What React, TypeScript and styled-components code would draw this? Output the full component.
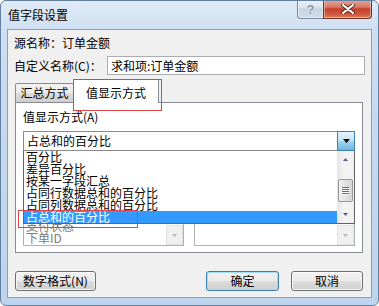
import styled, { createGlobalStyle } from "styled-components";

const GlobalStyle = createGlobalStyle`
  html, body { margin: 0; padding: 0; background: #ffffff; }
  body {
    font-family: "Noto Sans CJK SC", "Liberation Sans", sans-serif;
    font-size: 12px;
    color: #000;
  }
  * { box-sizing: border-box; }
`;

const listItems = [
  "百分比",
  "差异百分比",
  "按某一字段汇总",
  "占同行数据总和的百分比",
  "占同列数据总和的百分比",
  "占总和的百分比",
];

const ArrowDown = ({ color = "#000", w = 7, h = 4 }: { color?: string; w?: number; h?: number }) => (
  <svg width={w} height={h} viewBox={`0 0 ${w} ${h}`}>
    <polygon points={`0,0 ${w},0 ${w / 2},${h}`} fill={color} />
  </svg>
);

const ArrowUp = ({ color = "#000", w = 7, h = 4 }: { color?: string; w?: number; h?: number }) => (
  <svg width={w} height={h} viewBox={`0 0 ${w} ${h}`}>
    <polygon points={`0,${h} ${w},${h} ${w / 2},0`} fill={color} />
  </svg>
);

const App = () => {
  return (
    <>
      <GlobalStyle />
      <Window>
        <TitleBar>
          <Title>值字段设置</Title>
          <CaptionButtons>
            <CaptionButton $kind="help">?</CaptionButton>
            <CaptionButton $kind="close">
              <svg width="14" height="10" viewBox="0 0 14 10">
                <path d="M2 1 L12 9 M12 1 L2 9" stroke="#5a2a22" strokeWidth="4" strokeLinecap="round" />
                <path d="M2 1 L12 9 M12 1 L2 9" stroke="#ffffff" strokeWidth="2.2" strokeLinecap="round" />
              </svg>
            </CaptionButton>
          </CaptionButtons>
        </TitleBar>

        <Content>
          <InfoRow>源名称：订单金额</InfoRow>
          <FieldRow>
            <FieldLabel>自定义名称(C)：</FieldLabel>
            <TextInput>求和项:订单金额</TextInput>
          </FieldRow>

          <TabArea>
            <TabStrip>
              <Tab>汇总方式</Tab>
              <Tab $active>值显示方式</Tab>
            </TabStrip>
            <Highlight $left={58} $top={0} $width={89} $height={32} />

            <TabPanel>
              <PanelLabel>值显示方式(A)</PanelLabel>
              <ComboWrap>
                <Combo>
                  <ComboText>占总和的百分比</ComboText>
                  <ComboButton>
                    <ArrowDown />
                  </ComboButton>
                </Combo>
                <DropList>
                  <DropItems>
                    {listItems.map((item, i) => (
                      <DropItem key={item} $selected={i === listItems.length - 1}>
                        {item}
                      </DropItem>
                    ))}
                  </DropItems>
                  <ScrollBar>
                    <ScrollArrow>
                      <ArrowUp color="#4d6185" w={5} h={3} />
                    </ScrollArrow>
                    <ScrollTrack>
                      <Thumb>
                        <Grip />
                        <Grip />
                        <Grip />
                        <Grip />
                      </Thumb>
                    </ScrollTrack>
                    <ScrollArrow>
                      <ArrowDown color="#4d6185" w={5} h={3} />
                    </ScrollArrow>
                  </ScrollBar>
                </DropList>
              </ComboWrap>

              <LowerArea>
                <LowerLabels>
                  <span>基本字段(F)：</span>
                  <span>基本项(I)：</span>
                </LowerLabels>
                <ListBoxes>
                  <ListBox>
                    <ListItems>
                      <ListItem>客户名称</ListItem>
                      <ListItem>支付状态</ListItem>
                      <ListItem>下单ID</ListItem>
                    </ListItems>
                    <DisabledScroll>
                      <DisabledArrow>
                        <ArrowDown color="#b8b8b8" w={5} h={3} />
                      </DisabledArrow>
                    </DisabledScroll>
                  </ListBox>
                  <ListBox>
                    <ListItems />
                    <DisabledScroll>
                      <DisabledArrow>
                        <ArrowDown color="#b8b8b8" w={5} h={3} />
                      </DisabledArrow>
                    </DisabledScroll>
                  </ListBox>
                </ListBoxes>
              </LowerArea>
              <Highlight $left={2} $top={107} $width={120} $height={18} />
            </TabPanel>
          </TabArea>

          <ButtonRow>
            <PushButton $width={81}>数字格式(N)</PushButton>
            <Spacer />
            <PushButton $width={73} $default>确定</PushButton>
            <PushButton $width={72}>取消</PushButton>
          </ButtonRow>
        </Content>
      </Window>
    </>
  );
};

const Window = styled.div`
  width: 379px;
  height: 306px;
  display: flex;
  flex-direction: column;
  border: 1px solid #62809f;
  border-radius: 6px;
  overflow: hidden;
  background: linear-gradient(180deg, #e0ebf7 0px, #cfdff2 28px, #c6d9ef 120px, #bed3ec 100%);
`;

const TitleBar = styled.div`
  height: 28px;
  flex: none;
  display: flex;
  align-items: flex-start;
  padding: 0 6px 0 7px;
`;

const Title = styled.div`
  flex: 1;
  padding-top: 7px;
  line-height: 14px;
  font-size: 12px;
`;

const CaptionButtons = styled.div`
  display: flex;
  margin-top: -1px;
`;

const CaptionButton = styled.div<{ $kind: "help" | "close" }>`
  height: 19px;
  width: ${(p) => (p.$kind === "close" ? 49 : 26)}px;
  display: flex;
  align-items: center;
  justify-content: center;
  font-family: "Liberation Sans", sans-serif;
  font-weight: bold;
  font-size: 13px;
  border: 1px solid ${(p) => (p.$kind === "close" ? "#6e2e24" : "#7a8aa0")};
  border-right: ${(p) => (p.$kind === "close" ? "1px solid #6e2e24" : "none")};
  border-top: none;
  border-radius: ${(p) => (p.$kind === "close" ? "0 0 4px 0" : "0 0 0 4px")};
  color: ${(p) => (p.$kind === "close" ? "#fff" : "#8a96a6")};
  text-shadow: ${(p) => (p.$kind === "close" ? "none" : "0 0 1px #fff, 0 0 1px #fff")};
  background: ${(p) =>
    p.$kind === "close"
      ? "linear-gradient(180deg, #e7a798 0%, #d77763 40%, #c4402a 50%, #cf5a42 80%, #dc7e5c 100%)"
      : "linear-gradient(180deg, #eef3f9 0%, #dbe4ef 40%, #c5d2e1 50%, #d2deea 100%)"};
  box-shadow: inset 0 0 0 1px rgba(255, 255, 255, 0.45);
`;

const Content = styled.div`
  flex: 1;
  margin: 0 6px 7px 6px;
  border: 1px solid #8c9fb6;
  background: #f0f0f0;
  padding: 6px;
  display: flex;
  flex-direction: column;
`;

const InfoRow = styled.div`
  line-height: 14px;
  height: 14px;
`;

const FieldRow = styled.div`
  margin-top: 6px;
  height: 19px;
  display: flex;
  align-items: center;
`;

const FieldLabel = styled.div`
  width: 93px;
  line-height: 14px;
`;

const TextInput = styled.div`
  flex: 1;
  height: 19px;
  border: 1px solid #abadb3;
  background: #fff;
  padding-left: 3px;
  line-height: 17px;
`;

const TabArea = styled.div`
  position: relative;
  margin: 4px 2px 0 1px;
  flex: none;
`;

const TabStrip = styled.div`
  height: 23px;
  display: flex;
  align-items: flex-end;
`;

const Tab = styled.div<{ $active?: boolean }>`
  position: relative;
  z-index: ${(p) => (p.$active ? 2 : 1)};
  height: ${(p) => (p.$active ? 24 : 19)}px;
  width: ${(p) => (p.$active ? 86 : 59)}px;
  margin-left: ${(p) => (p.$active ? -1 : 0)}px;
  margin-bottom: ${(p) => (p.$active ? -1 : 0)}px;
  border: 1px solid #898c95;
  border-bottom: none;
  border-radius: 2px 2px 0 0;
  background: ${(p) => (p.$active ? "#ffffff" : "linear-gradient(180deg, #f2f2f2 0%, #ebebeb 50%, #dddddd 50%, #cfcfcf 100%)")};
  display: flex;
  align-items: ${(p) => (p.$active ? "flex-start" : "center")};
  padding-top: ${(p) => (p.$active ? 6 : 0)}px;
  justify-content: center;
  line-height: 14px;
`;

const Highlight = styled.div<{ $left: number; $top: number; $width: number; $height: number }>`
  position: absolute;
  left: ${(p) => p.$left}px;
  top: ${(p) => p.$top}px;
  width: ${(p) => p.$width}px;
  height: ${(p) => p.$height}px;
  border: 1px solid #dc4646;
  pointer-events: none;
  z-index: 20;
`;

const TabPanel = styled.div`
  position: relative;
  height: 151px;
  border: 1px solid #898c95;
  background: #ffffff;
  padding: 7px 7px 6px 7px;
  display: flex;
  flex-direction: column;
`;

const PanelLabel = styled.div`
  line-height: 14px;
  height: 14px;
`;

const ComboWrap = styled.div`
  position: relative;
  margin-top: 7px;
  z-index: 10;
`;

const Combo = styled.div`
  height: 20px;
  border: 1px solid #8a8a8a;
  background: #fff;
  display: flex;
`;

const ComboText = styled.div`
  flex: 1;
  padding-left: 3px;
  line-height: 18px;
`;

const ComboButton = styled.div`
  width: 18px;
  margin: -1px -1px -1px 0;
  border: 1px solid #3c7fb1;
  border-radius: 1px;
  background: linear-gradient(180deg, #e4f3fb 0%, #c7e6f7 45%, #9fd3f0 55%, #6fb6de 100%);
  display: flex;
  align-items: center;
  justify-content: center;
`;

const DropList = styled.div`
  position: absolute;
  left: 0;
  right: 0;
  top: 100%;
  height: 73px;
  background: #fff;
  border: 1px solid #646464;
  border-top: none;
  display: flex;
`;

const DropItems = styled.div`
  flex: 1;
  display: flex;
  flex-direction: column;
`;

const DropItem = styled.div<{ $selected?: boolean }>`
  height: 12px;
  line-height: 12px;
  padding-left: 2px;
  overflow: hidden;
  white-space: nowrap;
  color: ${(p) => (p.$selected ? "#ffffff" : "#000000")};
  background: ${(p) => (p.$selected ? "#3399ff" : "transparent")};
`;

const ScrollBar = styled.div`
  width: 17px;
  display: flex;
  flex-direction: column;
  background: linear-gradient(90deg, #e6e6e6 0%, #f4f4f4 40%, #f0f0f0 100%);
`;

const ScrollArrow = styled.div`
  height: 17px;
  display: flex;
  align-items: center;
  justify-content: center;
`;

const ScrollTrack = styled.div`
  flex: 1;
  padding: 11px 1px 0 1px;
`;

const Thumb = styled.div`
  height: 23px;
  border: 1px solid #979797;
  border-radius: 2px;
  background: linear-gradient(90deg, #f2f2f2 0%, #e2e2e2 50%, #d6d6d6 100%);
  display: flex;
  flex-direction: column;
  align-items: center;
  justify-content: center;
  gap: 1px;
`;

const Grip = styled.div`
  width: 7px;
  height: 1px;
  background: #6b6b6b;
  box-shadow: 0 1px 0 #ffffff;
`;

const LowerArea = styled.div`
  flex: 1;
  margin-top: 10px;
  display: flex;
  flex-direction: column;
`;

const LowerLabels = styled.div`
  display: grid;
  grid-template-columns: 1fr 1fr;
  column-gap: 10px;
  line-height: 14px;
  color: #8d8d8d;
`;

const ListBoxes = styled.div`
  flex: 1;
  margin-top: 3px;
  display: grid;
  grid-template-columns: 1fr 1fr;
  column-gap: 10px;
`;

const ListBox = styled.div`
  border: 1px solid #adb2b5;
  background: #fff;
  display: flex;
`;

const ListItems = styled.div`
  flex: 1;
  display: flex;
  flex-direction: column;
  justify-content: flex-end;
  padding-bottom: 1px;
`;

const ListItem = styled.div`
  height: 12px;
  line-height: 12px;
  padding-left: 2px;
  color: #7a7a7a;
`;

const DisabledScroll = styled.div`
  width: 17px;
  display: flex;
  flex-direction: column;
  justify-content: flex-end;
  background: #fbfbfb;
`;

const DisabledArrow = styled.div`
  height: 20px;
  background: #f0f0f0;
  border: 1px solid #e2e2e2;
  display: flex;
  align-items: center;
  justify-content: center;
`;

const ButtonRow = styled.div`
  margin: 18px 2px 0 1px;
  display: flex;
  gap: 12px;
`;

const Spacer = styled.div`
  flex: 1;
`;

const PushButton = styled.div<{ $width: number; $default?: boolean }>`
  width: ${(p) => p.$width}px;
  height: 20px;
  border: 1px solid ${(p) => (p.$default ? "#3c7fb1" : "#707070")};
  border-radius: 3px;
  background: linear-gradient(180deg, #f2f2f2 0%, #ebebeb 50%, #dddddd 50%, #cfcfcf 100%);
  box-shadow: inset 0 0 0 1px ${(p) => (p.$default ? "#a6dcf6" : "rgba(255, 255, 255, 0.75)")};
  display: flex;
  align-items: center;
  justify-content: center;
  line-height: 14px;
`;

export default App;
